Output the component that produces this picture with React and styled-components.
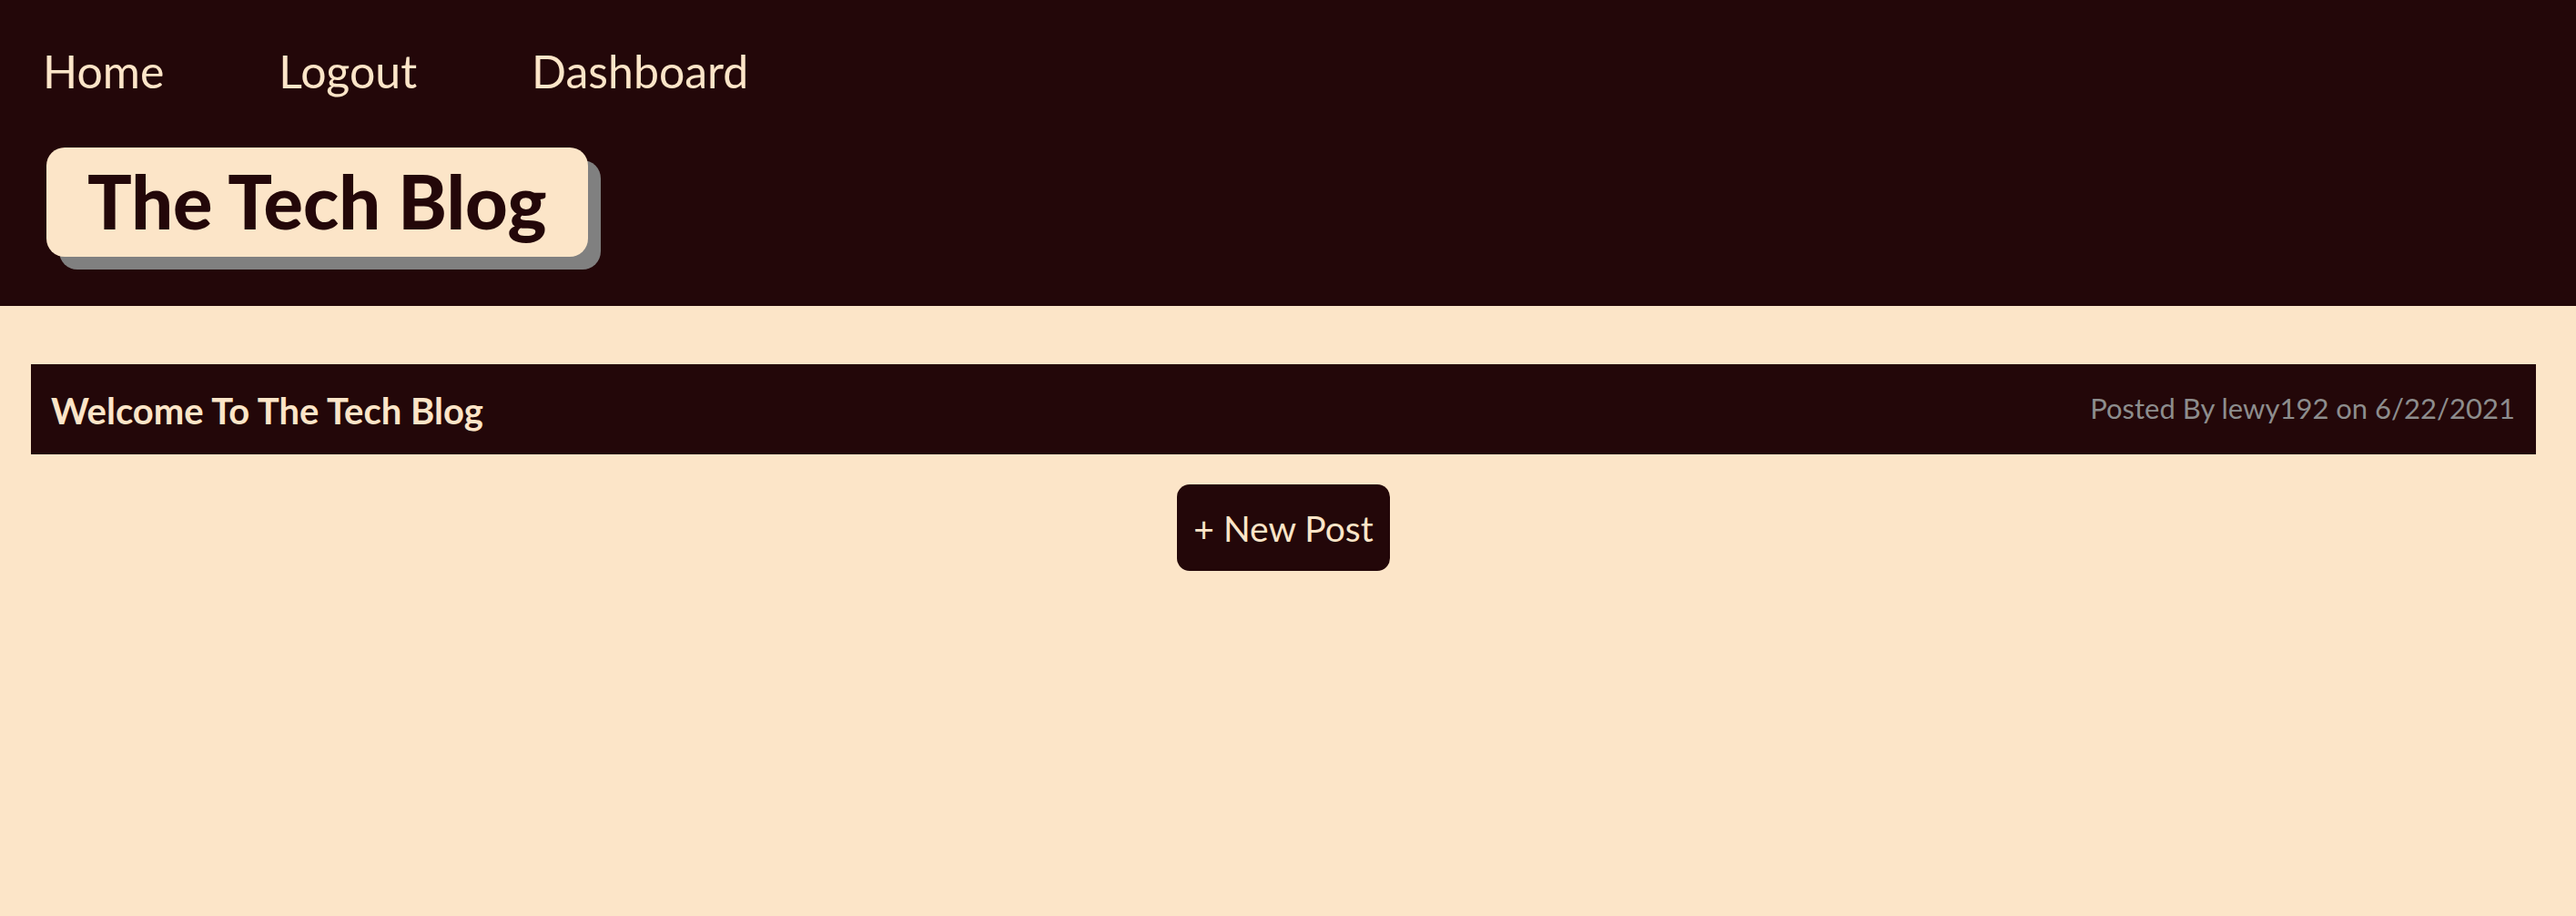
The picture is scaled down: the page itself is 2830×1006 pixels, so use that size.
import React from "react";
import styled, { createGlobalStyle } from "styled-components";

const DARK = "#230709";
const CREAM = "#fce5c8";

const GlobalStyle = createGlobalStyle`
  html, body {
    margin: 0;
    padding: 0;
    background: ${CREAM};
    font-family: Lato, "Open Sans", "Liberation Sans", sans-serif;
  }
  * { box-sizing: border-box; }
`;

const Header = styled.header`
  background: ${DARK};
  padding: 48px 0 54px 0;
  display: flex;
  flex-direction: column;
  align-items: flex-start;
`;

const Nav = styled.nav`
  display: flex;
  gap: 126px;
  padding-left: 47px;
`;

const NavLink = styled.a`
  color: ${CREAM};
  font-size: 50px;
  line-height: 60px;
  text-decoration: none;
  cursor: pointer;
`;

const TitleBox = styled.h1`
  margin: 54px 0 0 51px;
  background: ${CREAM};
  color: ${DARK};
  font-size: 81px;
  font-weight: 900;
  line-height: 97px;
  padding: 10px 46px 13px 45px;
  border-radius: 20px;
  box-shadow: 14px 14px 0 #808080;
`;

const Main = styled.main`
  padding: 64px 44px 0 34px;
  display: flex;
  flex-direction: column;
`;

const PostBar = styled.div`
  background: ${DARK};
  height: 99px;
  padding: 0 23px 0 22px;
  display: flex;
  align-items: center;
  justify-content: space-between;
`;

const PostTitle = styled.h2`
  margin: 0;
  color: ${CREAM};
  font-size: 40px;
  font-weight: 700;
  padding-top: 2px;
`;

const PostMeta = styled.span`
  color: #8d8d8d;
  font-size: 31px;
  padding-bottom: 4px;
`;

const Actions = styled.div`
  display: flex;
  justify-content: center;
  margin-top: 33px;
`;

const Button = styled.button`
  background: ${DARK};
  color: ${CREAM};
  font-family: inherit;
  font-size: 39px;
  height: 95px;
  padding: 0 18px;
  border: none;
  border-radius: 14px;
  cursor: pointer;
`;

export default function App() {
  return (
    <>
      <GlobalStyle />
      <Header>
        <Nav>
          <NavLink>Home</NavLink>
          <NavLink>Logout</NavLink>
          <NavLink>Dashboard</NavLink>
        </Nav>
        <TitleBox>The Tech Blog</TitleBox>
      </Header>
      <Main>
        <PostBar>
          <PostTitle>Welcome To The Tech Blog</PostTitle>
          <PostMeta>Posted By lewy192 on 6/22/2021</PostMeta>
        </PostBar>
        <Actions>
          <Button>+ New Post</Button>
        </Actions>
      </Main>
    </>
  );
}
